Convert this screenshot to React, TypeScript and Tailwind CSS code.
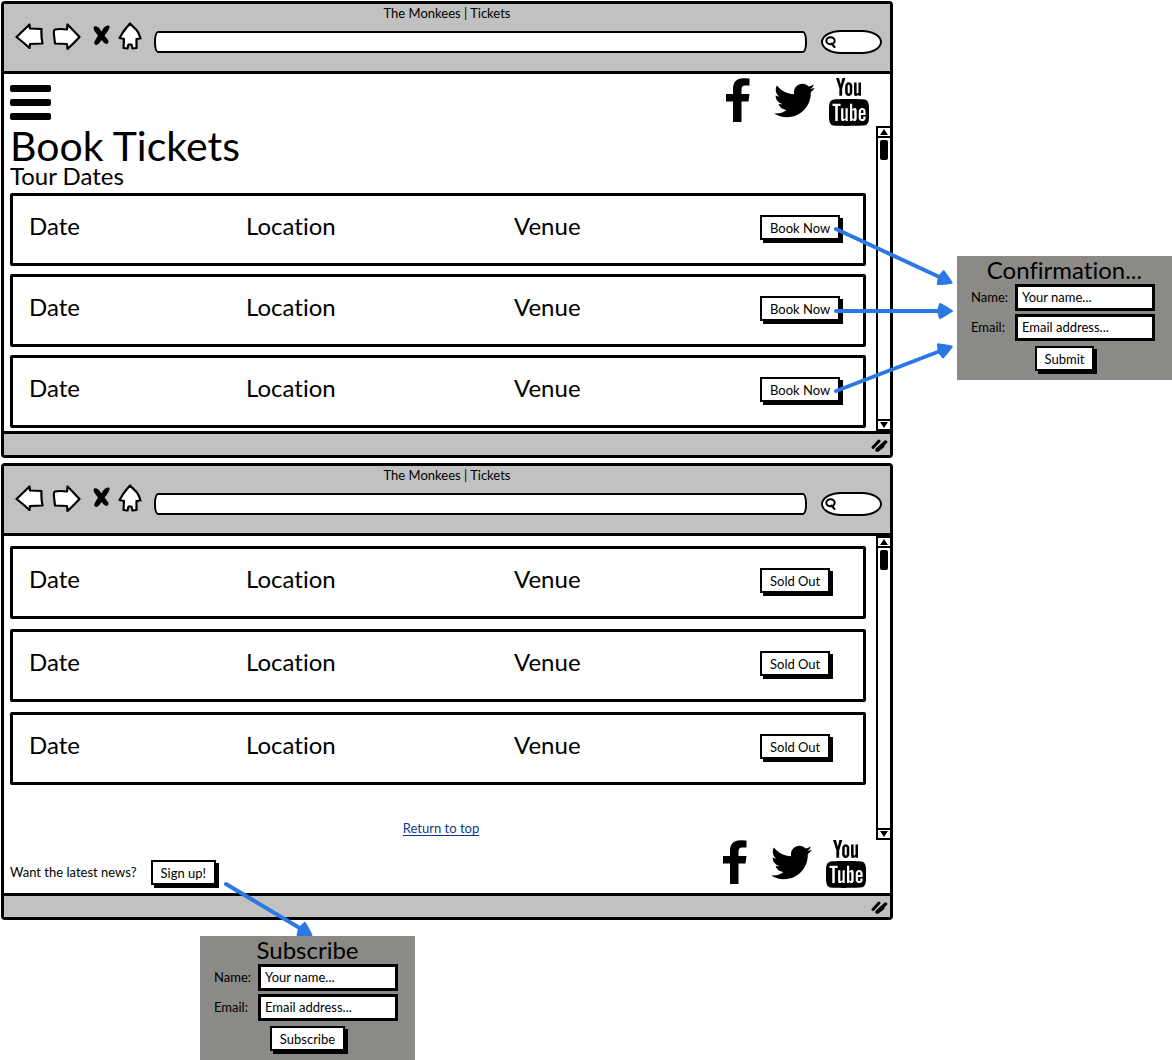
import type { ReactNode } from "react";
import { FaTwitter } from "react-icons/fa";
import { ImYoutube2 } from "react-icons/im";

function BackIcon() {
  return (
    <svg width="29" height="28" viewBox="0 0 29 28" fill="#fff" stroke="#000" strokeWidth="2.2" strokeLinejoin="round" aria-hidden="true">
      <path d="M1.500 15 L14.500 2.500 L15 6.500 L26.500 7 Q26 14 27.500 21.500 L15 22 L14.500 26 Q8 20 1.500 15Z" />
    </svg>
  );
}

function ForwardIcon() {
  return (
    <svg width="29" height="28" viewBox="0 0 29 28" fill="#fff" stroke="#000" strokeWidth="2.2" strokeLinejoin="round" aria-hidden="true">
      <path d="M27.500 15 Q21 8 15.500 2.500 L15 7.500 Q8 6.500 3 7.500 Q1.500 8 2 13 L3 21.500 L15 22 L15.500 27 Q22 21 27.500 15Z" />
    </svg>
  );
}

function StopIcon() {
  return (
    <svg width="21" height="28" viewBox="0 0 21 28" aria-hidden="true">
      <path d="M5 4.500 Q8 3.500 10 6 L12.500 9.500 Q15 4 19 3.500 Q21.500 3.500 20 7 Q18 11 15.500 13.500 L19 18 Q20.500 21.500 17.500 22 Q15 21.500 12.500 18 Q9.500 23 7 23 Q4 22 6 18.500 L9 13.500 L5.500 9 Q4 6 5 4.500Z" />
    </svg>
  );
}

function HomeIcon() {
  return (
    <svg width="24" height="28" viewBox="0 0 24 28" fill="#fff" stroke="#000" strokeWidth="2.2" strokeLinejoin="round" aria-hidden="true">
      <path d="M12 1.500 Q8 6 5.500 9.500 L1.500 16 L6 17 L5.500 26 L9.500 26.500 L10.500 22.500 L13.500 22.500 L14.500 26.500 L18.500 26 L18.500 17 L22.500 16.500 Q20.500 10 18.500 8 Z" />
    </svg>
  );
}

function Chrome({ children }: { children: ReactNode }) {
  return (
    <section className="ml-px flex flex-col rounded-sm border-3 border-black bg-white">
      <header className="border-b-3 border-black bg-[#c1c1c1] pb-[9px]">
        <p className="text-center text-[13px] leading-[18px]">The Monkees | Tickets</p>
        <div className="flex h-10 items-center pr-2 pl-[11px]">
          <nav className="flex gap-2 self-start" aria-label="Browser">
            <button aria-label="Back"><BackIcon /></button>
            <button aria-label="Forward"><ForwardIcon /></button>
            <button aria-label="Stop"><StopIcon /></button>
            <button aria-label="Home"><HomeIcon /></button>
          </nav>
          <input
            aria-label="Address"
            className="ml-3 h-[22px] min-w-0 flex-1 rounded-[4px/10px] border-2 border-black bg-white px-2 text-[13px] outline-none"
          />
          <label className="ml-3.5 flex h-6 w-[61px] shrink-0 items-center rounded-[20px/12px] border-2 border-black bg-white pl-0.5">
            <svg width="12" height="12" viewBox="0 0 12 12" fill="none" stroke="#000" strokeWidth="2" strokeLinecap="round" className="shrink-0" aria-hidden="true">
              <ellipse cx="5.500" cy="4.800" rx="4.200" ry="3.500" />
              <path d="M6.500 7.500 L9.500 11" />
            </svg>
            <input aria-label="Search" className="w-full min-w-0 text-xs outline-none" />
          </label>
        </div>
      </header>
      {children}
      <footer className="flex h-6 items-center justify-end border-t-3 border-black bg-[#c1c1c1] pr-0.5">
        <svg width="17" height="14" viewBox="0 0 17 14" stroke="#000" strokeLinecap="round" aria-hidden="true">
          <path d="M2 9.500 L8 3" strokeWidth="3" />
          <path d="M6 12 L14.500 4" strokeWidth="3.500" />
          <path d="M7 11.500 L11.500 8" strokeWidth="4" />
        </svg>
      </footer>
    </section>
  );
}

function SocialLinks() {
  return (
    <div className="flex">
      <a href="#facebook" aria-label="Facebook">
        <svg width="24" height="44" viewBox="0 0 24 44" aria-hidden="true">
          <path d="M23.500 0.500 L23.500 7.500 L19 7.500 Q15.500 7.500 15.500 11.500 L15.500 16 L23.500 16 L22.500 23.500 L15.500 23.500 L15.500 44 L7 44 L7 23.500 L0 23.500 L0 16 L7 16 L7 11 Q7 0.200 17.500 0.200 Z" />
        </svg>
      </a>
      <a href="#twitter" aria-label="Twitter" className="ml-6 pt-0.5">
        <FaTwitter size={41} />
      </a>
      <a href="#youtube" aria-label="YouTube" className="ml-3.5 flex w-10 flex-col items-center gap-0.5">
        <ImYoutube2 viewBox="0 2.5 15.8 11.2" className="h-[19px] w-[27px]" />
        <ImYoutube2 viewBox="16.2 0 23.8 16" className="h-[27px] w-10" />
      </a>
    </div>
  );
}

function ScrollBar() {
  return (
    <div className="flex w-3.5 shrink-0 flex-col border-t-2 border-l-2 border-black">
      <button aria-label="Scroll up" className="flex h-2.5 items-center justify-center border-b-2 border-black">
        <svg width="8" height="6" viewBox="0 0 8 6" aria-hidden="true"><path d="M4 0 L8 6 L0 6Z" /></svg>
      </button>
      <span className="mt-0.5 ml-0.5 h-5 w-2 rounded-xs bg-black" />
      <button aria-label="Scroll down" className="mt-auto flex h-3 items-center justify-center border-y-2 border-black">
        <svg width="8" height="6" viewBox="0 0 8 6" aria-hidden="true"><path d="M4 6 L8 0 L0 0Z" /></svg>
      </button>
    </div>
  );
}

function SketchButton({ children }: { children: ReactNode }) {
  return (
    <button className="h-[25px] border-2 border-black bg-white px-2 text-[13px] leading-5 whitespace-nowrap shadow-[3px_3px_0_#000]">
      {children}
    </button>
  );
}

function TourDate({ action }: { action: string }) {
  return (
    <li className="grid h-[73px] grid-cols-[217fr_268fr_246fr_103fr] items-center rounded-xs border-3 border-black pb-2 pl-4 text-2xl">
      <span>Date</span>
      <span>Location</span>
      <span>Venue</span>
      <span className="flex pt-1"><SketchButton>{action}</SketchButton></span>
    </li>
  );
}

function FormPanel({ id, title, submit, children }: { id: string; title: string; submit: string; children: ReactNode }) {
  return (
    <form className="relative w-[215px] shrink-0 bg-[#8b8a87] pb-[9px]" onSubmit={(e) => e.preventDefault()}>
      {children}
      <h2 className="text-center text-2xl leading-7">{title}</h2>
      <div className="grid grid-cols-[44px_1fr] items-center gap-y-[3px] pr-[17px] pl-3.5 text-[13px]">
        <label htmlFor={`${id}-name`}>Name:</label>
        <input id={`${id}-name`} placeholder="Your name..." className="h-[27px] w-full border-3 border-black bg-white px-1 pb-0.5 outline-none placeholder:text-black" />
        <label htmlFor={`${id}-email`}>Email:</label>
        <input id={`${id}-email`} placeholder="Email address..." className="h-[27px] w-full border-3 border-black bg-white px-1 pb-0.5 outline-none placeholder:text-black" />
      </div>
      <div className="mt-[5px] flex justify-center">
        <SketchButton>{submit}</SketchButton>
      </div>
    </form>
  );
}

function Arrow({ x1, y1, x2, y2 }: { x1: number; y1: number; x2: number; y2: number }) {
  const angle = (Math.atan2(y2 - y1, x2 - x1) * 180) / Math.PI;
  return (
    <g fill="#2a78e4" stroke="#2a78e4" strokeLinecap="round" strokeLinejoin="round">
      <path d={`M${x1} ${y1} L${x2} ${y2}`} strokeWidth="4" />
      <path d="M4 0 Q-2 -4 -8 -7 Q-9 -4 -10 0 Q-9 4 -8 7 Q-2 4 4 0 Z" strokeWidth="2" transform={`translate(${x2} ${y2}) rotate(${angle})`} />
    </g>
  );
}

export default function App() {
  return (
    <main className="min-h-screen bg-white pt-px font-['Lato',sans-serif] text-black [font-variant-ligatures:none]">
      <div className="flex items-start">
        <div className="flex min-w-0 flex-1 flex-col gap-[5px]">
          <Chrome>
            <div className="flex h-[52px] items-start justify-between pt-1 pr-[21px] pl-1.5">
              <button aria-label="Menu" className="mt-[7px] flex flex-col gap-[7px]">
                <span className="h-[7px] w-[41px] rounded-xs bg-black" />
                <span className="h-[7px] w-[41px] rounded-xs bg-black" />
                <span className="h-[7px] w-[41px] rounded-xs bg-black" />
              </button>
              <SocialLinks />
            </div>
            <div className="flex">
              <div className="flex-1 pr-2.5 pb-[3px] pl-1.5">
                <h1 className="text-[41px] leading-10">Book Tickets</h1>
                <h2 className="mb-[7px] text-2xl leading-5">Tour Dates</h2>
                <ul className="flex flex-col gap-2">
                  <TourDate action="Book Now" />
                  <TourDate action="Book Now" />
                  <TourDate action="Book Now" />
                </ul>
              </div>
              <ScrollBar />
            </div>
          </Chrome>
          <Chrome>
            <div className="flex">
              <div className="flex-1 pt-2.5 pr-2.5 pb-[3px] pl-1.5">
                <ul className="flex flex-col gap-2.5">
                  <TourDate action="Sold Out" />
                  <TourDate action="Sold Out" />
                  <TourDate action="Sold Out" />
                </ul>
                <p className="mt-[34px] pl-1.5 text-center text-[13px] leading-[18px]">
                  <a href="#top" className="text-[#0b3b8c] underline underline-offset-2">Return to top</a>
                </p>
              </div>
              <ScrollBar />
            </div>
            <div className="flex h-[53px] items-start justify-between pr-6 pl-1.5">
              <div className="mt-5 flex items-center gap-3.5 text-[13px]">
                <span>Want the latest news?</span>
                <SketchButton>Sign up!</SketchButton>
              </div>
              <SocialLinks />
            </div>
          </Chrome>
        </div>
        <aside className="mt-[255px] ml-16">
          <FormPanel id="confirm" title="Confirmation..." submit="Submit">
            <svg width="130" height="175" viewBox="0 0 130 175" className="pointer-events-none absolute -top-[34px] right-full" aria-hidden="true">
              <Arrow x1={9} y1={7} x2={121} y2={59} />
              <Arrow x1={9} y1={89} x2={121} y2={89} />
              <Arrow x1={9} y1={169} x2={121} y2={126} />
            </svg>
          </FormPanel>
        </aside>
      </div>
      <div className="mt-4 ml-[200px] flex">
        <FormPanel id="subscribe" title="Subscribe" submit="Subscribe">
          <svg width="100" height="60" viewBox="0 0 100 60" className="pointer-events-none absolute bottom-full left-5" aria-hidden="true">
            <Arrow x1={6} y1={8} x2={88} y2={57} />
          </svg>
        </FormPanel>
      </div>
    </main>
  );
}
